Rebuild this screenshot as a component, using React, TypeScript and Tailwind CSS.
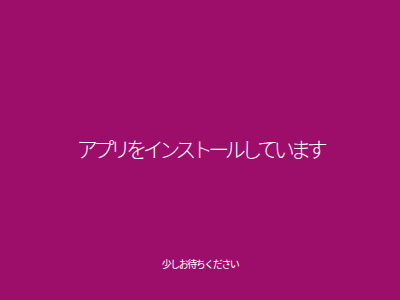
export default function App() {
  return (
    <div
      className="flex h-[300px] w-full flex-col bg-[#9d0e6b] text-white"
      style={{ fontFamily: '"Noto Sans CJK JP", "Noto Sans", sans-serif' }}
    >
      {/* Main message */}
      <div className="flex justify-center pt-[137px]">
        <h1 className="text-[21px] font-light leading-[22px] tracking-[-4.5px]">
          アプリをインストールしています
        </h1>
      </div>

      {/* Footer note */}
      <div className="mt-auto flex justify-center pb-[31px]">
        <p className="text-[10px] leading-none tracking-[-1.5px]">少しお待ちください</p>
      </div>
    </div>
  )
}
